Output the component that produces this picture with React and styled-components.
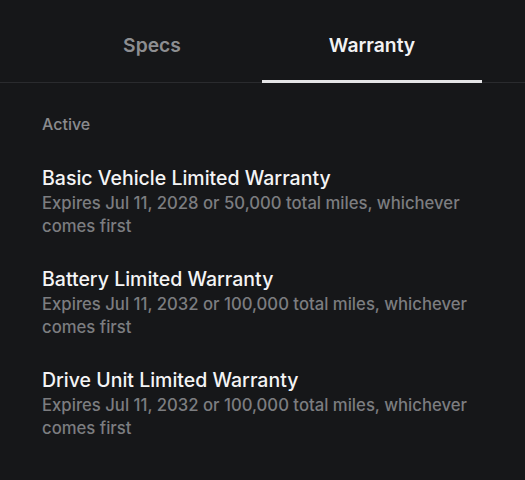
import React from "react";
import styled, { createGlobalStyle } from "styled-components";

const Global = createGlobalStyle`
  html, body { margin: 0; padding: 0; background: #161719; }
  body { font-family: Inter, "Noto Sans", sans-serif; -webkit-font-smoothing: antialiased; }
`;

const Page = styled.div`
  width: 525px;
  height: 480px;
  background: #161719;
  overflow: hidden;
`;

const TabBar = styled.div`
  display: flex;
  padding: 0 43px 0 42px;
  border-bottom: 1px solid #2a2b2e;
`;

const Tab = styled.div`
  flex: 1;
  height: 83px;
  box-sizing: border-box;
  display: flex;
  align-items: center;
  justify-content: center;
  padding-top: 9px;
  font-size: 19.3px;
  font-weight: 600;
  color: ${(p) => (p.$active ? "#f2f2f3" : "#8d8e91")};
  border-bottom: 3px solid ${(p) => (p.$active ? "#e4e4e6" : "transparent")};
  margin-bottom: -1px;
`;

const Content = styled.div`
  padding: 31px 42px 0;
  display: flex;
  flex-direction: column;
`;

const SectionLabel = styled.div`
  font-size: 16px;
  font-weight: 500;
  color: #8a8b8e;
  line-height: 20px;
  margin-bottom: 31px;
`;

const List = styled.div`
  display: flex;
  flex-direction: column;
  gap: 28px;
`;

const Item = styled.div`
  display: flex;
  flex-direction: column;
`;

const Title = styled.div`
  font-size: 19.5px;
  font-weight: 500;
  color: #f4f4f5;
  line-height: 26px;
  margin-bottom: 1px;
`;

const Sub = styled.div`
  font-size: 16.7px;
  font-weight: 500;
  color: #7c7d80;
  line-height: 23px;
  max-width: 440px;
`;

const items = [
  { t: "Basic Vehicle Limited Warranty", s: "Expires Jul 11, 2028 or 50,000 total miles, whichever comes first" },
  { t: "Battery Limited Warranty", s: "Expires Jul 11, 2032 or 100,000 total miles, whichever comes first" },
  { t: "Drive Unit Limited Warranty", s: "Expires Jul 11, 2032 or 100,000 total miles, whichever comes first" },
];

export default function App() {
  return (
    <Page>
      <Global />
      <TabBar>
        <Tab>Specs</Tab>
        <Tab $active>Warranty</Tab>
      </TabBar>
      <Content>
        <SectionLabel>Active</SectionLabel>
        <List>
          {items.map((i) => (
            <Item key={i.t}>
              <Title>{i.t}</Title>
              <Sub>{i.s}</Sub>
            </Item>
          ))}
        </List>
      </Content>
    </Page>
  );
}
